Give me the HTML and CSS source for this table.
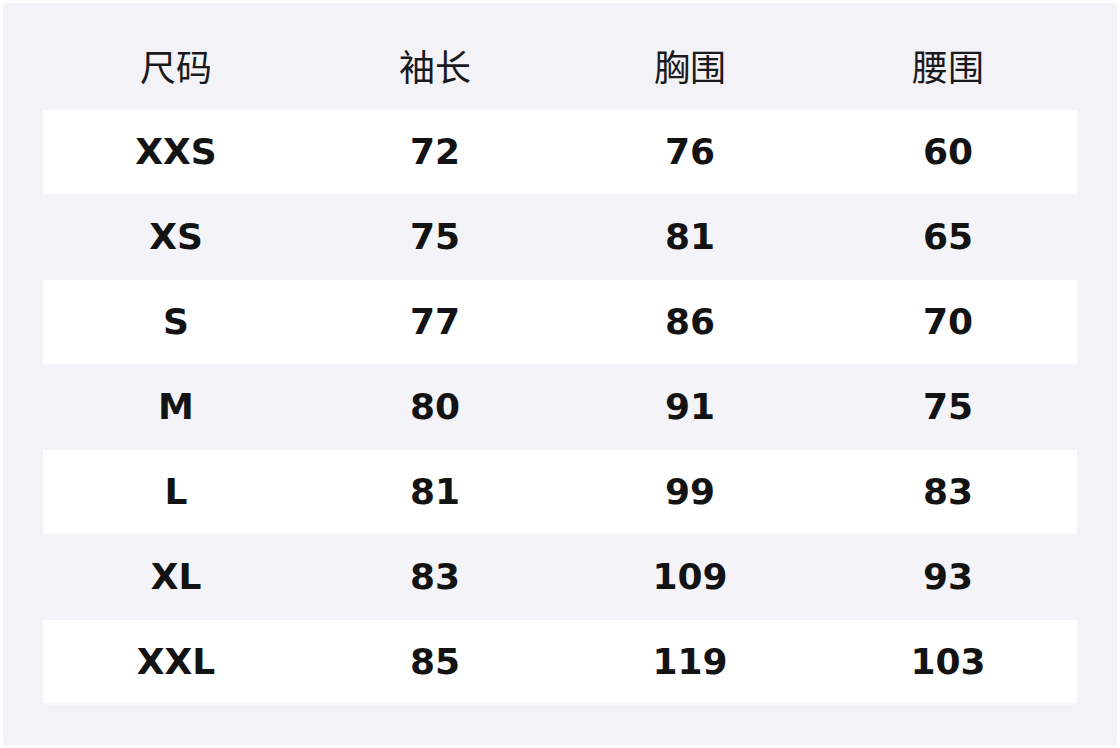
FILE: index.html
```html
<!DOCTYPE html>
<html lang="zh">
<head>
<meta charset="utf-8">
<link rel="stylesheet" href="styles.css">
</head>
<body>
<div class="panel">
  <div class="row head">
    <div>尺码</div><div>袖长</div><div>胸围</div><div>腰围</div>
  </div>
  <div class="row odd"><div>XXS</div><div>72</div><div>76</div><div>60</div></div>
  <div class="row even"><div>XS</div><div>75</div><div>81</div><div>65</div></div>
  <div class="row odd"><div>S</div><div>77</div><div>86</div><div>70</div></div>
  <div class="row even"><div>M</div><div>80</div><div>91</div><div>75</div></div>
  <div class="row odd"><div>L</div><div>81</div><div>99</div><div>83</div></div>
  <div class="row even"><div>XL</div><div>83</div><div>109</div><div>93</div></div>
  <div class="row odd"><div>XXL</div><div>85</div><div>119</div><div>103</div></div>
</div>
</body>
</html>
```

FILE: styles.css
```css
html, body {
  margin: 0;
  padding: 0;
  background: #ffffff;
}
.panel {
  margin: 3px;
  width: 1114px;
  height: 742px;
  box-sizing: border-box;
  background: #f2f2f7;
  border-radius: 4px;
  padding: 22px 40px 40px 40px;
  display: flex;
  flex-direction: column;
}
.row {
  display: grid;
  grid-template-columns: 266px 252px 258px 258px;
  height: 85px;
  box-sizing: border-box;
  align-items: center;
  text-align: center;
  color: #131313;
  font-family: "DejaVu Sans", "Noto Sans CJK SC", sans-serif;
  font-weight: bold;
  font-size: 36px;
  line-height: 1;
  padding-bottom: 2px;
}
.row.head {
  font-family: "Noto Sans CJK SC", sans-serif;
  font-weight: normal;
  font-size: 36px;
  color: #1a1a1c;
  padding-bottom: 6px;
}
.row.odd {
  background: #ffffff;
  box-shadow: inset 0 -2px 0 #f8f8fb;
}
.row.even {
  background: #f4f4f8;
}
```
